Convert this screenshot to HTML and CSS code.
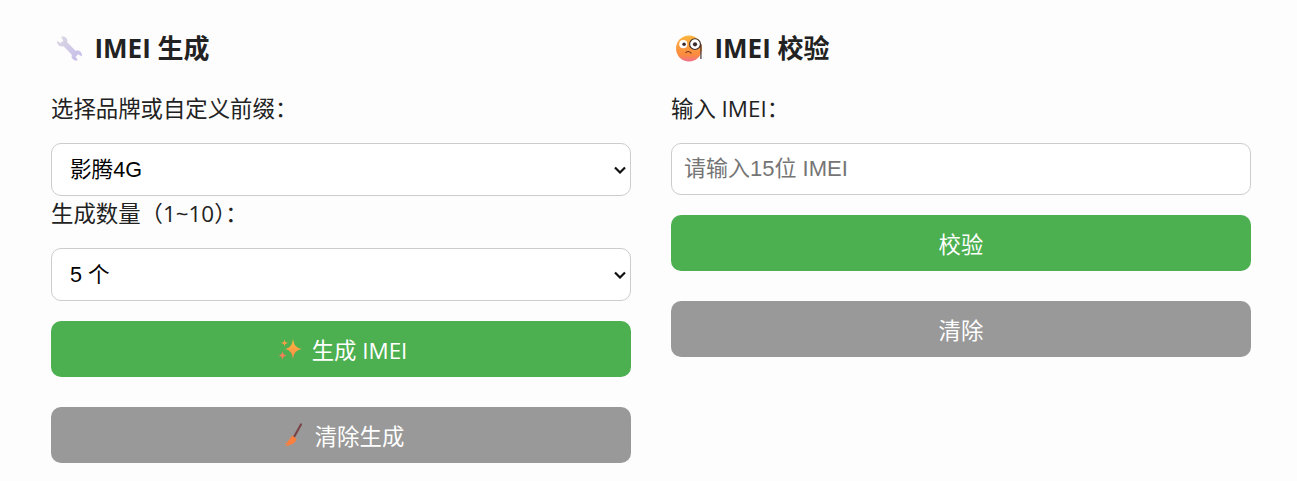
FILE: index.html
```html
<!DOCTYPE html>
<html lang="zh-CN">
<head>
    <meta charset="UTF-8">
    <meta name="viewport" content="width=device-width, initial-scale=1.0">
    <title>IMEI 工具</title>
    <link rel="stylesheet" href="styles.css">
</head>
<body>
    <div class="container">
        <section class="panel">
            <h2>
                <svg class="title-icon" viewBox="0 0 26 26" aria-hidden="true">
                    <defs>
                        <linearGradient id="steel" x1="0" y1="0" x2="1" y2="1">
                            <stop offset="0" stop-color="#dcd8e2"/>
                            <stop offset="1" stop-color="#c6bcec"/>
                        </linearGradient>
                    </defs>
                    <path d="M1.200 5.500 4.200 7.800 7 5.500 5 1.800C8.500 .5 11.800 3.500 10.800 7L18.800 15.200C22.500 14.200 25.800 17 24.800 20.800L21.500 18.500 19 20.800 21 24.300C17.500 25.500 14.200 22.500 15.200 19L7.200 10.800C3.500 11.800 .5 9 1.200 5.500Z" fill="url(#steel)"/>
                </svg>
                <span>IMEI 生成</span>
            </h2>
            <label for="brand">选择品牌或自定义前缀：</label>
            <select id="brand" class="field">
                <option>影腾4G</option>
            </select>
            <label class="label-tight" for="count">生成数量（1~10）：</label>
            <select id="count" class="field">
                <option>5 个</option>
            </select>
            <button class="btn btn-green btn-with-icon">
                <svg class="btn-icon" viewBox="0 0 24 24" aria-hidden="true">
                    <defs>
                        <linearGradient id="spark" x1="0" y1="0" x2="0" y2="1">
                            <stop offset="0" stop-color="#ffb93d"/>
                            <stop offset="1" stop-color="#fb8a4a"/>
                        </linearGradient>
                    </defs>
                    <path d="M15 2C16 8 17.500 10.500 24 12 17.500 13.500 16 16 15 22 14 16 12.500 13.500 7 12 12.500 10.500 14 8 15 2Z" fill="url(#spark)"/>
                    <path d="M6.500 2.500C7 5 7.500 5.500 10 6 7.500 6.500 7 7 6.500 9.500 6 7 5.500 6.500 3 6 5.500 5.500 6 5 6.500 2.500Z" fill="#fba046"/>
                    <path d="M4.500 14C5 17 6 18 8.500 18.500 6 19 5 20 4.500 23 4 20 3 19 .5 18.500 3 18 4 17 4.500 14Z" fill="#f57f5a"/>
                </svg>
                <span>生成 IMEI</span>
            </button>
            <button class="btn btn-gray btn-with-icon">
                <svg class="btn-icon" viewBox="0 0 24 24" aria-hidden="true">
                    <path d="M20 1.500 13 14" stroke="#7a4548" stroke-width="2.200" stroke-linecap="round"/>
                    <path d="M11 12.500 15.500 15.500C15 19 12 22 4 23.500 5.500 22.500 6 22 6.500 21 5.500 21.300 4.500 21.300 3.500 21.300 7 19 9 16 11 12.500Z" fill="#f9803f"/>
                </svg>
                <span>清除生成</span>
            </button>
        </section>

        <section class="panel">
            <h2>
                <svg class="title-icon" viewBox="0 0 26 26" aria-hidden="true">
                    <defs>
                        <linearGradient id="face" x1="0" y1="0" x2="0" y2="1">
                            <stop offset="0" stop-color="#fdb53e"/>
                            <stop offset=".75" stop-color="#fb8a3f"/>
                            <stop offset="1" stop-color="#f0708c"/>
                        </linearGradient>
                    </defs>
                    <circle cx="12.500" cy="13" r="12.500" fill="url(#face)"/>
                    <circle cx="7" cy="8.800" r="3.900" fill="#fff"/>
                    <circle cx="7.800" cy="9" r="1.700" fill="#3d2a2a"/>
                    <circle cx="18.300" cy="8.800" r="5.200" fill="#fff" stroke="#3d2a2a" stroke-width="1.100"/>
                    <circle cx="18.300" cy="9" r="2" fill="#3d2a2a"/>
                    <path d="M24 9V23" stroke="#3d2a2a" stroke-width="1.100"/>
                    <path d="M9.500 17C11 15.500 13 15.500 14.500 17.500" fill="none" stroke="#7a3c20" stroke-width="1.100" stroke-linecap="round"/>
                </svg>
                <span>IMEI 校验</span>
            </h2>
            <label for="imei">输入 IMEI：</label>
            <input id="imei" class="field field-input" type="text" placeholder="请输入15位 IMEI">
            <button class="btn btn-green">校验</button>
            <button class="btn btn-gray">清除</button>
        </section>
    </div>
</body>
</html>
```

FILE: styles.css
```css
body {
    margin: 0;
    background-color: #fdfdfd;
    color: #222;
    font-family: "Open Sans", "Noto Sans CJK SC", sans-serif;
}
.container {
    display: flex;
    gap: 40px;
    padding: 20px 46px 0 51px;
}
.panel {
    flex: 1;
    display: flex;
    flex-direction: column;
}
h2 {
    display: flex;
    align-items: center;
    gap: 11.5px;
    margin: 0 0 22px 5px;
    height: 56px;
    font-size: 26px;
    line-height: 56px;
    font-weight: 700;
}
.title-icon {
    width: 27px;
    height: 27px;
}
label {
    display: block;
    height: 22px;
    margin-bottom: 23px;
    font-size: 22.4px;
    line-height: 22px;
}
.label-tight {
    margin-top: 7px;
}
.field {
    box-sizing: border-box;
    width: 100%;
    height: 53px;
    padding: 0 30px 0 18px;
    border: 1px solid #ccc;
    border-radius: 10px;
    background-color: #fff;
    color: #000;
    font-family: "Liberation Sans", "Noto Sans CJK SC", sans-serif;
    font-size: 21.6px;
    appearance: none;
    background-image: url("data:image/svg+xml,%3Csvg xmlns='http://www.w3.org/2000/svg' width='12' height='8' viewBox='0 0 12 8'%3E%3Cpath d='M1 1.500 6 6.500 11 1.500' fill='none' stroke='%23111' stroke-width='2.200'/%3E%3C/svg%3E");
    background-repeat: no-repeat;
    background-position: right 4px center;
}
.field-input {
    height: 52px;
    padding: 0 12px;
    font-size: 22px;
    background-image: none;
}
.field-input::placeholder {
    color: #757575;
}
.btn {
    display: flex;
    align-items: center;
    justify-content: center;
    gap: 10px;
    width: 100%;
    height: 56px;
    margin-top: 20px;
    border: none;
    border-radius: 10px;
    color: #fff;
    font-family: "Open Sans", "Noto Sans CJK SC", sans-serif;
    font-size: 22.4px;
    cursor: pointer;
}
.btn-with-icon {
    padding-left: 9px;
}
.btn-gray {
    margin-top: 30px;
    background-color: #999;
}
.btn-green {
    background-color: #4caf50;
}
.btn-icon {
    width: 24px;
    height: 24px;
}
```
